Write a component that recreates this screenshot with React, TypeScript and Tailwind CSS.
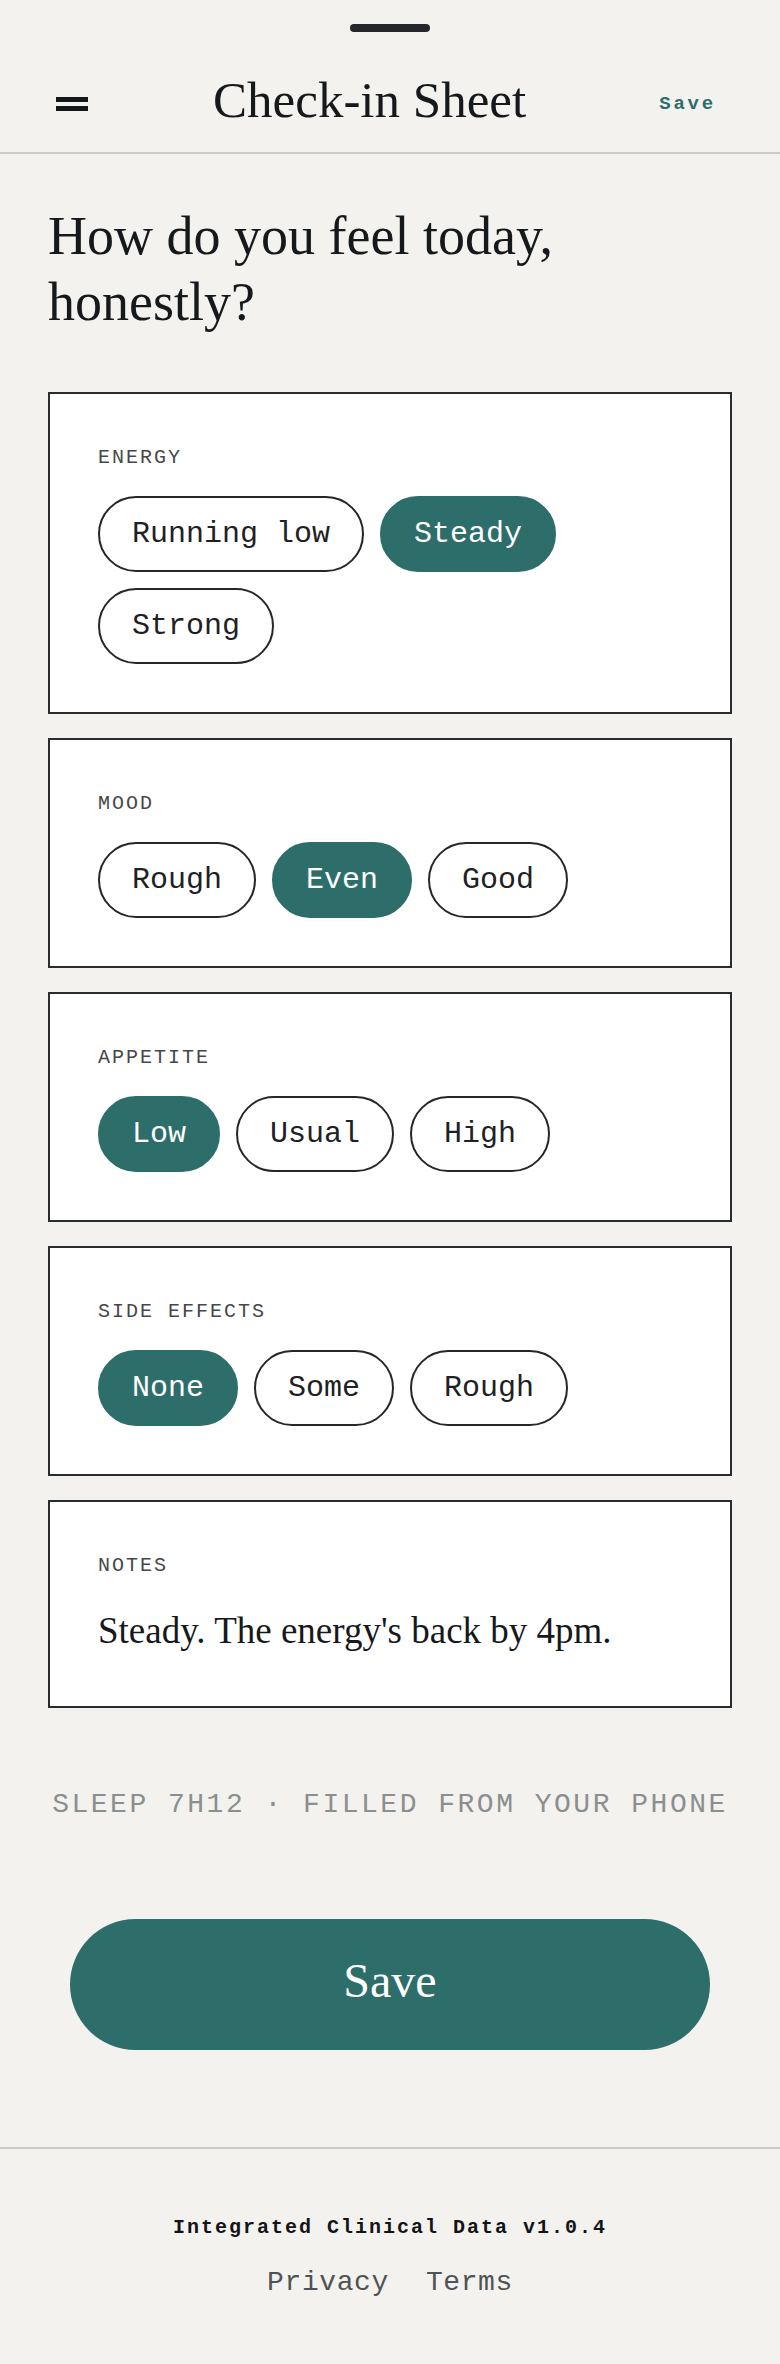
import React from "react";

const serif = "font-['Liberation_Serif','Times_New_Roman',serif]";
const mono = "font-['Liberation_Mono','DejaVu_Sans_Mono',monospace]";

type Group = { label: string; options: string[]; selected: string };

const groups: Group[] = [
  { label: "ENERGY", options: ["Running low", "Steady", "Strong"], selected: "Steady" },
  { label: "MOOD", options: ["Rough", "Even", "Good"], selected: "Even" },
  { label: "APPETITE", options: ["Low", "Usual", "High"], selected: "Low" },
  { label: "SIDE EFFECTS", options: ["None", "Some", "Rough"], selected: "None" },
];

function Label({ children }: { children: React.ReactNode }) {
  return (
    <div className={`${mono} text-[20px] leading-[32px] tracking-[2px] text-[#45484b] mb-[22px]`}>
      {children}
    </div>
  );
}

function Pill({ text, active }: { text: string; active: boolean }) {
  return (
    <button
      className={`${mono} h-[76px] px-8 rounded-full border-2 flex items-center text-[30px] whitespace-pre ${
        active
          ? "bg-[#2d6e6a] border-[#2d6e6a] text-white"
          : "bg-white border-[#25282b] text-[#1e2124]"
      }`}
    >
      {text}
    </button>
  );
}

export default function App() {
  return (
    <div className="min-h-screen bg-[#f3f2ee] text-[#1a1d20]">
      {/* top handle */}
      <div className="pt-6">
        <div className="mx-auto h-2 w-20 rounded-full bg-[#23272b]" />
      </div>

      {/* header */}
      <header className="h-[122px] pt-4 px-12 flex items-center border-b-2 border-[#cbcbc9]">
        <button className="p-2 mt-2 flex flex-col gap-1" aria-label="Menu">
          <span className="block h-[5px] w-8 bg-[#15181b]" />
          <span className="block h-[5px] w-8 bg-[#15181b]" />
        </button>
        <h1 className={`${serif} flex-1 text-center text-[51px] leading-[51px] text-[#16191c]`}>
          Check-in Sheet
        </h1>
        <button
          className={`${mono} mt-2 px-4 text-[19px] leading-[24px] font-bold tracking-[2.8px] text-[#2d6e6a]`}
        >
          Save
        </button>
      </header>

      <main className="px-12 pt-[49px]">
        <h2 className={`${serif} text-[54px] leading-[66px] text-[#16191c] mb-[57px]`}>
          How do you feel today,
          <br />
          honestly?
        </h2>

        <div className="flex flex-col gap-6">
          {groups.map((g) => (
            <section key={g.label} className="bg-white border-2 border-[#2a2d30] p-12">
              <Label>{g.label}</Label>
              <div className="flex flex-wrap gap-4">
                {g.options.map((o) => (
                  <Pill key={o} text={o} active={o === g.selected} />
                ))}
              </div>
            </section>
          ))}
          <section className="bg-white border-2 border-[#2a2d30] p-12">
            <Label>NOTES</Label>
            <p className={`${serif} text-[37px] leading-[54px] text-[#16191c]`}>
              Steady. The energy's back by 4pm.
            </p>
          </section>
        </div>

        <p
          className={`${mono} mt-[77px] text-center text-[28px] leading-[40px] tracking-[2.5px] text-[#8a8f8f]`}
        >
          SLEEP 7H12 · FILLED FROM YOUR PHONE
        </p>

        <div className="mt-[94px] mb-[97px] px-[22px]">
          <button
            className={`${serif} w-full h-[131px] rounded-full bg-[#2d6e6a] text-white text-[48px] leading-[48px] pb-2`}
          >
            Save
          </button>
        </div>
      </main>

      <footer className="border-t-2 border-[#cbcbc9] pt-[65px] pb-[61px] flex flex-col items-center">
        <div className={`${mono} text-[20px] leading-[28px] font-bold tracking-[2px] text-[#121417]`}>
          Integrated Clinical Data v1.0.4
        </div>
        <div className={`${mono} mt-[21px] flex gap-[37px] text-[28px] leading-[40px] tracking-[0.6px] text-[#505356]`}>
          <a>Privacy</a>
          <a>Terms</a>
        </div>
      </footer>
    </div>
  );
}
